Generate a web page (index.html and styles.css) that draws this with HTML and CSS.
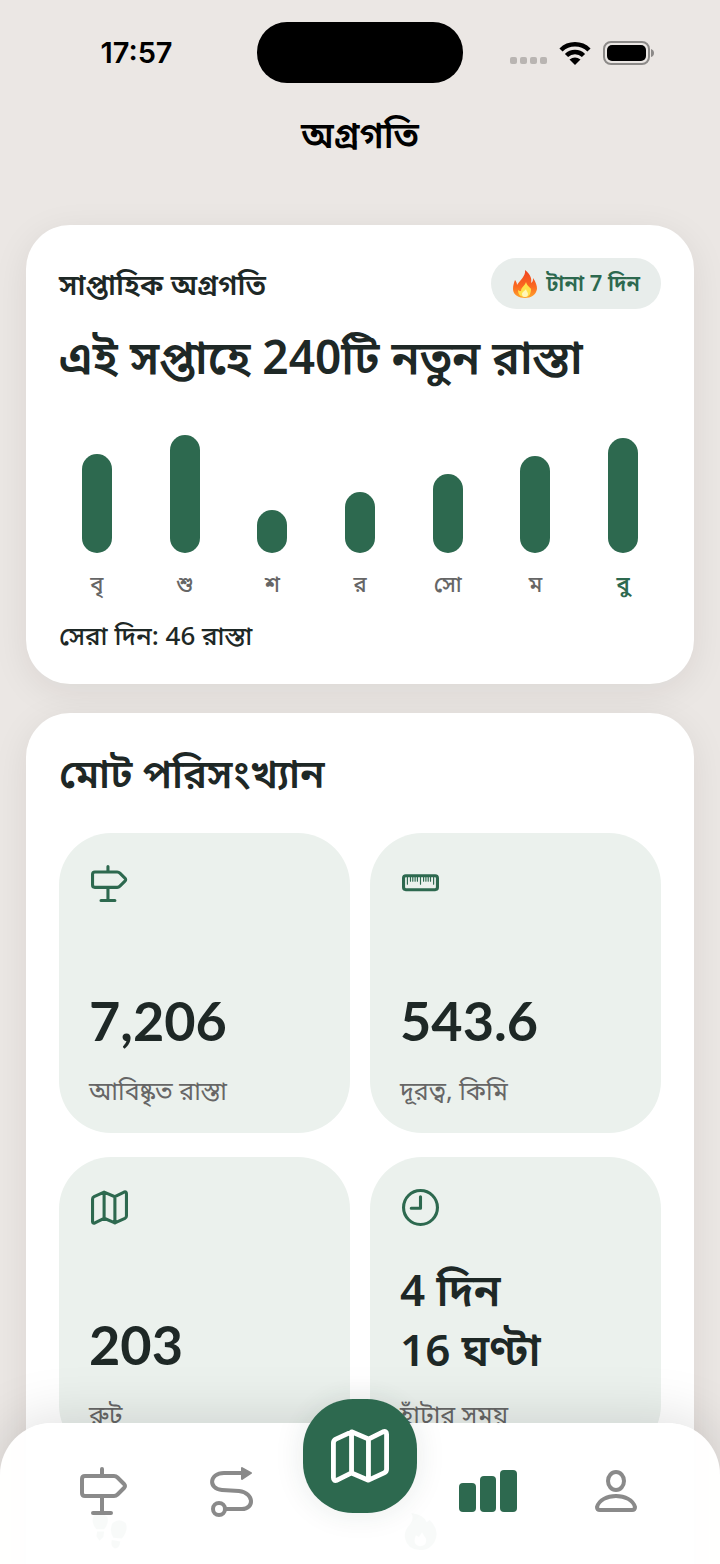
FILE: index.html
```html
<!DOCTYPE html>
<html lang="bn">
<head>
  <meta charset="utf-8">
  <meta name="viewport" content="width=device-width, initial-scale=1">
  <title>অগ্রগতি</title>
  <link rel="stylesheet" href="styles.css">
</head>
<body>

  <!-- shared icons -->
  <svg class="sprite" aria-hidden="true">
    <symbol id="signpost" viewBox="0 0 48 48">
      <path d="M22 2v6M22 29v17M13 46h18M5 9h29q2 0 3.500 1.500L44 17q2 2 0 4l-6.500 6.500Q36 29 34 29H5q-3 0-3-3V12q0-3 3-3z"/>
    </symbol>
    <symbol id="map" viewBox="0 0 48 48">
      <path d="M17 4v34M31 10v34M17 4l14 6 12-6q3-1 3 2v29q0 2-2 3l-13 6-14-6-12 6q-3 1-3-2V13q0-2 2-3z"/>
    </symbol>
  </svg>

  <header class="status-bar">
    <span class="time">17:57</span>
    <span class="island"></span>
    <span class="status-icons">
      <svg width="37" height="8" viewBox="0 0 37 8" fill="#b9b5b2"><rect width="7" height="7" rx="2"/><rect x="10" width="7" height="7" rx="2"/><rect x="20" width="7" height="7" rx="2"/><rect x="30" width="7" height="7" rx="2"/></svg>
      <svg class="wifi" width="32" height="24" viewBox="0 0 32 24" fill="none" stroke="#000" stroke-width="4.500"><path d="M2 9a20 20 0 0 1 28 0"/><path d="M7.500 14.500a12 12 0 0 1 17 0"/><path d="M16 24l-5.500-5.500q5.500-4 11 0z" fill="#000" stroke="none"/></svg>
      <svg width="51" height="24" viewBox="0 0 51 24"><rect x="1" y="1" width="45" height="22" rx="7" fill="none" stroke="#8c8a88" stroke-width="2"/><rect x="4" y="4" width="39" height="16" rx="5"/><path d="M48 8q3 1 3 4t-3 4z" fill="#8c8a88"/></svg>
    </span>
  </header>

  <h1>অগ্রগতি</h1>

  <main>
    <section class="card weekly">
      <div class="weekly-head">
        <h2>সাপ্তাহিক অগ্রগতি</h2>
        <span class="streak">
          <svg width="26" height="28" viewBox="0 0 26 28">
            <defs><linearGradient id="fire" x1="0" y1="0" x2="0" y2="1"><stop offset="0" stop-color="#f0421f"/><stop offset=".6" stop-color="#fb6a20"/><stop offset="1" stop-color="#ffa52e"/></linearGradient></defs>
            <path fill="url(#fire)" d="M13 0c6 5 7 9 6 13 2-1 2-3 2-5 3 4 4 8 4 11-1 6-6 9-12 9S1 25 1 19c0-4 1-6 2-9 1 1 2 3 2 5 3-5 9-9 8-15z"/>
            <path fill="#ffe14a" d="M14 12c1 4 4 5 5 7 0 5-2 8-6 8s-7-2-7-7c1 1 2 1 3 1 0-4 4-5 5-9z"/>
            <path fill="#fff6b8" d="M14 19c0 2 2 3 2 5s-1 3-3 3-3-1-3-3 3-3 4-5z"/>
          </svg>
          টানা 7 দিন
        </span>
      </div>
      <p class="headline">এই সপ্তাহে 240টি নতুন রাস্তা</p>
      <div class="chart">
        <div class="day"><span class="bar" style="height: 99px"></span>বৃ</div>
        <div class="day"><span class="bar" style="height: 118px"></span>শু</div>
        <div class="day"><span class="bar" style="height: 43px"></span>শ</div>
        <div class="day"><span class="bar" style="height: 61px"></span>র</div>
        <div class="day"><span class="bar" style="height: 79px"></span>সো</div>
        <div class="day"><span class="bar" style="height: 97px"></span>ম</div>
        <div class="day today"><span class="bar" style="height: 115px"></span>বু</div>
      </div>
      <p class="best">সেরা দিন: 46 রাস্তা</p>
    </section>

    <section class="card totals">
      <h2>মোট পরিসংখ্যান</h2>
      <div class="tiles">
        <div class="tile">
          <svg class="icon"><use href="#signpost"/></svg>
          <strong>7,206</strong>
          <span class="label">আবিষ্কৃত রাস্তা</span>
        </div>
        <div class="tile">
          <svg class="icon" viewBox="0 0 48 48"><rect x="2" y="14" width="44" height="18" rx="3"/><path stroke-width="1.500" d="M7 15v10M11 15v6M14 15v6M17 15v6M20 15v6M24 15v10M28 15v6M31 15v6M34 15v6M37 15v6M41 15v10"/></svg>
          <strong>543.6</strong>
          <span class="label">দূরত্ব, কিমি</span>
        </div>
        <div class="tile">
          <svg class="icon"><use href="#map"/></svg>
          <strong>203</strong>
          <span class="label">রুট</span>
        </div>
        <div class="tile">
          <svg class="icon" viewBox="0 0 48 48"><circle cx="24" cy="24" r="22"/><path d="M24 10v15H12"/></svg>
          <strong class="duration">4 দিন<br>16 ঘণ্টা</strong>
          <span class="label">হাঁটার সময়</span>
        </div>
        <div class="tile">
          <svg class="icon solid" viewBox="0 0 48 48"><path d="M4 3q9-6 17 2 3 8-4 16H7Q-1 12 4 3zM8 24h9l-1 7-5 5-4-6zM28 13q9-7 17 0 4 10-5 20l-11-1q-6-9-1-19zM27 35l11 2q-1 9-7 9-6-2-4-11z"/></svg>
        </div>
        <div class="tile">
          <svg class="icon solid" viewBox="0 0 48 48"><path fill-rule="evenodd" d="M12 0q16 2 20 12l4-3q14 14 6 29-7 11-19 10Q7 47 4 33q-2-10 7-19Q16 6 12 0zM26 25l-4 6-4-2q-5 12 5 14 10 0 8-10-3-4-5-8z"/></svg>
        </div>
      </div>
    </section>
  </main>

  <nav class="tab-bar">
    <a href="#streets" aria-label="রাস্তা"><svg width="48" height="50"><use href="#signpost"/></svg></a>
    <a href="#routes" aria-label="রুট">
      <svg width="50" height="54" viewBox="0 0 50 54"><path d="M35 9H17C2 9 1 25 15 26l17 1c16 2 15 18 3 18H19"/><circle cx="12" cy="45" r="6"/><path d="M35 4l9 5-9 6z" fill="currentColor" stroke-width="2"/></svg>
    </a>
    <a href="#map-view" class="map-button" aria-label="মানচিত্র"><svg width="58" height="58"><use href="#map"/></svg></a>
    <a href="#progress" class="active" aria-label="অগ্রগতি">
      <svg width="60" height="44" viewBox="0 0 60 44"><rect x="1" y="14" width="17" height="29" rx="4"/><rect x="22" y="7" width="16" height="36" rx="4"/><rect x="42" y="1" width="17" height="42" rx="4"/></svg>
    </a>
    <a href="#profile" aria-label="প্রোফাইল">
      <svg width="42" height="44" viewBox="0 0 42 44"><ellipse cx="21" cy="12" rx="8" ry="9"/><path d="M5 41q-3 0-3-3c2-7 10-11 19-11s17 4 19 11q0 3-3 3z"/></svg>
    </a>
  </nav>

</body>
</html>
```
FILE: styles.css
```css
* {
  box-sizing: border-box;
}

body {
  display: flex;
  flex-direction: column;
  height: 100vh;
  margin: 0;
  background: #ebe7e4;
  color: #1e2826;
  font-family: "Noto Sans", "Noto Sans Bengali", sans-serif;
}

h1, h2, p {
  margin: 0;
  font-weight: 600;
}

.sprite {
  display: none;
}

svg {
  flex: none;
}

.status-bar {
  display: grid;
  grid-template-columns: 1fr 206px 1fr;
  align-items: center;
  padding: 22px 16px 0;
  color: #000;
}

.time {
  justify-self: center;
  font: 600 29px "Inter", sans-serif;
}

.island {
  height: 61px;
  border-radius: 30px;
  background: #000;
}

.status-icons {
  display: flex;
  justify-content: center;
  align-items: center;
  gap: 12px;
  padding-right: 4px;
}

.status-icons svg:first-child {
  align-self: flex-end;
}

h1 {
  margin-top: 22px;
  line-height: 60px;
  font-size: 36px;
  text-align: center;
  color: #000;
}

main {
  flex: 1;
  min-height: 0;
  padding: 60px 26px 0;
  overflow-y: auto;
  scrollbar-width: none;
}

.card {
  margin-bottom: 29px;
  padding: 33px;
  background: #fff;
  border-radius: 44px;
  box-shadow: 0 8px 36px rgba(40, 30, 25, 0.08);
}

.weekly-head {
  display: flex;
  justify-content: space-between;
  align-items: center;
}

.weekly-head h2 {
  font-size: 29px;
  line-height: 48px;
}

.streak {
  display: flex;
  align-items: center;
  gap: 8px;
  height: 51px;
  padding: 0 21px;
  border-radius: 26px;
  background: #e8edeb;
  color: #2d694f;
  font-size: 22px;
  font-weight: 600;
}

.headline {
  margin-top: 12px;
  font-size: 46px;
  line-height: 70px;
}

.chart {
  display: grid;
  grid-template-columns: repeat(7, 1fr);
  gap: 12px;
  align-items: end;
  height: 170px;
  margin-top: 38px;
}

.day {
  display: flex;
  flex-direction: column;
  align-items: center;
  gap: 14px;
  font-size: 22px;
  line-height: 32px;
  font-weight: 500;
  color: #666;
}

.bar {
  width: 30px;
  border-radius: 15px;
  background: #2d694f;
}

.today {
  color: #2d694f;
  font-weight: 600;
}

.best {
  margin-top: 20px;
  font-size: 26px;
  line-height: 32px;
  font-weight: 500;
}

.totals h2 {
  margin-bottom: 33px;
  font-size: 40px;
  line-height: 54px;
}

.tiles {
  display: grid;
  grid-template-columns: 1fr 1fr;
  gap: 24px 20px;
}

.tile {
  display: flex;
  flex-direction: column;
  min-height: 300px;
  padding: 32px 30px 24px;
  border-radius: 52px;
  background: #ebf1ed;
}

.icon {
  width: 37px;
  height: 37px;
  margin-left: 2px;
  fill: none;
  stroke: #2d694f;
  stroke-width: 4;
  stroke-linecap: round;
  stroke-linejoin: round;
}

.icon.solid {
  fill: #2d694f;
  stroke: none;
}

.tile strong {
  margin-top: auto;
  font-family: "Lato", "Noto Sans", "Noto Sans Bengali", sans-serif;
  font-size: 54px;
  line-height: 60px;
}

.tile .duration {
  margin-bottom: -4px;
  font-family: "Noto Sans", "Noto Sans Bengali", sans-serif;
  font-size: 44px;
  font-weight: 600;
}

.label {
  margin-top: 20px;
  font-size: 25px;
  line-height: 38px;
  color: #666;
}

.tab-bar {
  position: fixed;
  left: 0;
  right: 0;
  bottom: 0;
  display: grid;
  grid-template-columns: repeat(5, 1fr);
  grid-template-rows: minmax(0, 1fr);
  justify-items: center;
  align-items: center;
  height: 141px;
  padding: 0 40px 6px;
  border-radius: 52px 52px 0 0;
  background: rgba(255, 255, 255, 0.97);
  box-shadow: 0 0 60px rgba(0, 0, 0, 0.15);
}

.tab-bar a {
  display: flex;
  color: #8a8a8a;
}

.tab-bar svg {
  fill: none;
  stroke: currentColor;
  stroke-width: 4;
  stroke-linecap: round;
  stroke-linejoin: round;
}

.tab-bar .active svg {
  fill: #2d694f;
  stroke: none;
}

.tab-bar .map-button {
  align-items: center;
  justify-content: center;
  width: 114px;
  height: 114px;
  margin-bottom: 70px;
  border-radius: 50px;
  background: #2d694f;
  color: #fff;
  box-shadow: 0 0 30px rgba(30, 60, 45, 0.1);
}
```
